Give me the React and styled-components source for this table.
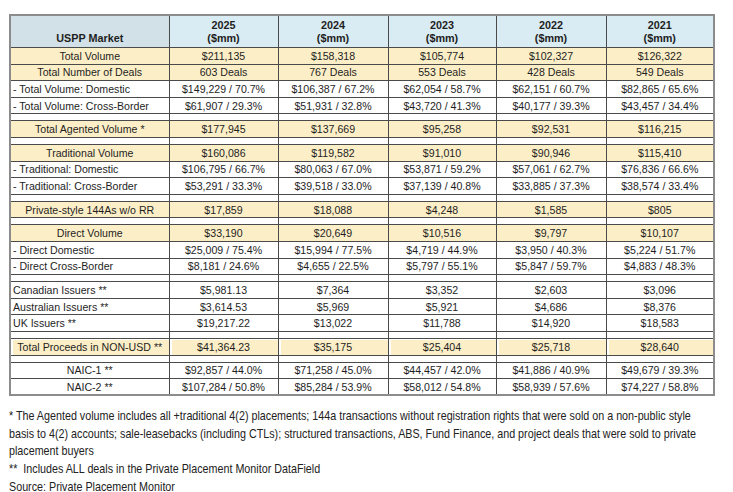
import React from "react";
import styled, { createGlobalStyle } from "styled-components";

const GlobalStyle = createGlobalStyle`
  body {
    margin: 0;
    background: #fff;
    font-family: "Liberation Sans", Arial, sans-serif;
    color: #1e1e1e;
  }
`;

const years = ["2025", "2024", "2023", "2022", "2021"];
const widths = [159, 109, 110, 108, 110, 108];

// kind: y = yellow total row, w = white row, s = spacer
const rows = [
  { kind: "y", label: "Total Volume", center: true, values: ["$211,135", "$158,318", "$105,774", "$102,327", "$126,322"] },
  { kind: "y", label: "Total Number of Deals", center: true, values: ["603 Deals", "767 Deals", "553 Deals", "428 Deals", "549 Deals"] },
  { kind: "w", label: "- Total Volume: Domestic", values: ["$149,229 / 70.7%", "$106,387 / 67.2%", "$62,054 / 58.7%", "$62,151 / 60.7%", "$82,865 / 65.6%"] },
  { kind: "w", label: "- Total Volume: Cross-Border", values: ["$61,907 / 29.3%", "$51,931 / 32.8%", "$43,720 / 41.3%", "$40,177 / 39.3%", "$43,457 / 34.4%"] },
  { kind: "s" },
  { kind: "y", label: "Total Agented Volume *", center: true, values: ["$177,945", "$137,669", "$95,258", "$92,531", "$116,215"] },
  { kind: "s" },
  { kind: "y", label: "Traditional Volume", center: true, values: ["$160,086", "$119,582", "$91,010", "$90,946", "$115,410"] },
  { kind: "w", label: "- Traditional: Domestic", values: ["$106,795 / 66.7%", "$80,063 / 67.0%", "$53,871 / 59.2%", "$57,061 / 62.7%", "$76,836 / 66.6%"] },
  { kind: "w", label: "- Traditional: Cross-Border", values: ["$53,291 / 33.3%", "$39,518 / 33.0%", "$37,139 / 40.8%", "$33,885 / 37.3%", "$38,574 / 33.4%"] },
  { kind: "s" },
  { kind: "y", label: "Private-style 144As w/o RR", center: true, values: ["$17,859", "$18,088", "$4,248", "$1,585", "$805"] },
  { kind: "s" },
  { kind: "y", label: "Direct Volume", center: true, values: ["$33,190", "$20,649", "$10,516", "$9,797", "$10,107"] },
  { kind: "w", label: "- Direct Domestic", values: ["$25,009 / 75.4%", "$15,994 / 77.5%", "$4,719 / 44.9%", "$3,950 / 40.3%", "$5,224 / 51.7%"] },
  { kind: "w", label: "- Direct Cross-Border", values: ["$8,181 / 24.6%", "$4,655 / 22.5%", "$5,797 / 55.1%", "$5,847 / 59.7%", "$4,883 / 48.3%"] },
  { kind: "s" },
  { kind: "w", label: "Canadian Issuers **", values: ["$5,981.13", "$7,364", "$3,352", "$2,603", "$3,096"] },
  { kind: "w", label: "Australian Issuers **", values: ["$3,614.53", "$5,969", "$5,921", "$4,686", "$8,376"] },
  { kind: "w", label: "UK Issuers **", values: ["$19,217.22", "$13,022", "$11,788", "$14,920", "$18,583"] },
  { kind: "s" },
  { kind: "y", inset: true, label: "Total Proceeds in NON-USD **", center: true, values: ["$41,364.23", "$35,175", "$25,404", "$25,718", "$28,640"] },
  { kind: "s" },
  { kind: "w", label: "NAIC-1 **", center: true, values: ["$92,857 / 44.0%", "$71,258 / 45.0%", "$44,457 / 42.0%", "$41,886 / 40.9%", "$49,679 / 39.3%"] },
  { kind: "w", label: "NAIC-2 **", center: true, values: ["$107,284 / 50.8%", "$85,284 / 53.9%", "$58,012 / 54.8%", "$58,939 / 57.6%", "$74,227 / 58.8%"] },
];

const Page = styled.div`
  padding: 14px 0 0 9px;
  width: 704px;
`;

const Table = styled.table`
  border-collapse: collapse;
  table-layout: fixed;
  width: 704px;
  border: 2px solid #8c8c8c;
`;

const HeadCell = styled.th`
  height: 29px;
  padding: 0 0 2px;
  background: ${(p) => (p.$first ? "#d2e1e7" : "#d9ecf3")};
  border: 1px solid #4a4a4a;
  font-size: 10.8px;
  font-weight: bold;
  line-height: 13px;
  text-align: center;
  vertical-align: bottom;
`;

const Row = styled.tr`
  height: ${(p) => (p.$spacer ? "7px" : "16.6px")};
  background: ${(p) => (p.$yellow ? "#fcefc8" : "#fff")};
`;

const Cell = styled.td`
  padding: 0 2px;
  border: 1px solid #4a4a4a;
  font-size: 10.6px;
  line-height: 12px;
  white-space: nowrap;
  overflow: hidden;
  text-align: ${(p) => (p.$left ? "left" : "center")};
  vertical-align: middle;
  box-shadow: ${(p) => (p.$inset ? "inset 2px 1px 0 #fff" : "none")};
`;

const Notes = styled.div`
  margin-top: 11px;
  font-family: "Liberation Sans", Arial, sans-serif;
  font-size: 13px;
  line-height: 17.6px;
  color: #222;
`;

// the source uses a narrow face; squeeze regular Liberation Sans to match
const Note = styled.p`
  margin: 0;
  white-space: pre;
  transform: scaleX(0.826);
  transform-origin: left center;
`;

export default function App() {
  return (
    <Page>
      <GlobalStyle />
      <Table>
        <colgroup>
          {widths.map((w, i) => (
            <col key={i} style={{ width: w }} />
          ))}
        </colgroup>
        <thead>
          <tr>
            <HeadCell $first>USPP Market</HeadCell>
            {years.map((y) => (
              <HeadCell key={y}>
                {y}
                <br />
                ($mm)
              </HeadCell>
            ))}
          </tr>
        </thead>
        <tbody>
          {rows.map((r, i) =>
            r.kind === "s" ? (
              <Row key={i} $spacer>
                {widths.map((_, j) => (
                  <Cell key={j} />
                ))}
              </Row>
            ) : (
              <Row key={i} $yellow={r.kind === "y"}>
                <Cell $left={!r.center} $inset={r.inset}>{r.label}</Cell>
                {r.values.map((v, j) => (
                  <Cell key={j} $inset={r.inset}>{v}</Cell>
                ))}
              </Row>
            )
          )}
        </tbody>
      </Table>
      <Notes>
        <Note>
          {"* The Agented volume includes all +traditional 4(2) placements; 144a transactions without registration rights that were sold on a non-public style\nbasis to 4(2) accounts; sale-leasebacks (including CTLs); structured transactions, ABS, Fund Finance, and project deals that were sold to private\nplacement buyers"}
        </Note>
        <Note>{"**  Includes ALL deals in the Private Placement Monitor DataField"}</Note>
        <Note>Source: Private Placement Monitor</Note>
      </Notes>
    </Page>
  );
}
